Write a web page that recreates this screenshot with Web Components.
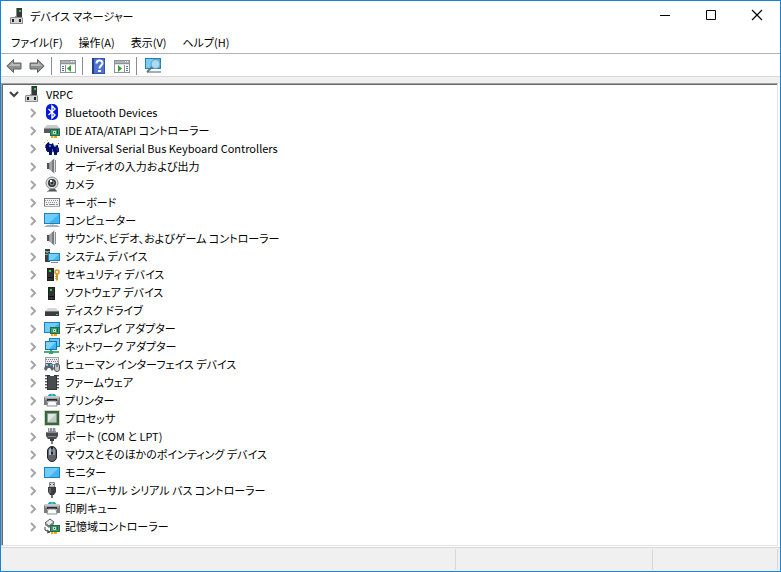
<!DOCTYPE html>
<html lang="ja">
<head>
<meta charset="utf-8">
<title>デバイス マネージャー</title>
<style>
  body {
    margin: 0;
    font: 11px/18px "Noto Sans CJK JP", "Noto Sans", sans-serif;
    font-feature-settings: "palt";
    color: #000;
  }
</style>
</head>
<body>
<dm-window>
  <dm-titlebar slot="title">デバイス マネージャー</dm-titlebar>
  <dm-menubar slot="menu"></dm-menubar>
  <dm-toolbar slot="tools"></dm-toolbar>
  <dm-tree></dm-tree>
  <dm-statusbar slot="status"></dm-statusbar>
</dm-window>

<script>
const board = '<path d="M6 7h10v7H6z" fill="#25694a"/><path d="M7 8h8v5H7z" fill="#3a9c6d"/><path d="M9 9h3v3H9z" fill="#b9e1c8"/><path d="M10 10h1v1h-1z" fill="#1d593c"/><path d="M13 8h1v4h-1z" fill="#185e3a"/><path d="M7 14h6v2H7z" fill="#eda51d"/><path d="M9 14h1v2H9z" fill="#fbe3a8"/>'
const screen = '<path d="M0 2h16v11H0z" fill="#1e7fb9"/><path d="M1 3h14v9H1z" fill="#42b4f0"/><path d="M1 3h14L5 12H1z" fill="#6fcdfb"/>'
const speaker = '<path d="M3 5h2v6H3z" fill="#4c5053"/><path d="M5 5l1-1v8l-1-1z" fill="#94989b"/><path d="M6 4l4-3v14l-4-3z" fill="#a4a8ab"/><path d="M8 2.500L10 1v14l-2-1.500z" fill="#777c80"/><path d="M10 0h1v16h-1z" fill="#d9dbdc"/><path d="M11 2h1v12h-1z" fill="#8d9295"/>'
const printer = '<path d="M4 4c0-3 8-3 8 0z" fill="#1f8fe0"/><path d="M7 2h2v2H7z" fill="#32d0d8"/><path d="M9 2h2v2H9z" fill="#2bb45a"/><path d="M1 4h14l1 2v7h-3V8H3v5H0V6z" fill="#777c7f"/><path d="M1 4h14v2H1z" fill="#c6c9cb"/><path d="M1 6h14v2H1z" fill="#a0a4a6"/><path d="M3 7h10v2H3z" fill="#25292b"/><path d="M4 9h8l1 5H3z" fill="#fafafa" stroke="#8c9092"/>'
const tower = '<path d="M4 3h7v13H4z" fill="#1d1f20"/><path d="M5 4h5v11H5z" fill="#303335"/><path d="M6 5h2v2H6z" fill="#24df3b"/><path d="M5 12h5v1H5z" fill="#111"/>'
const pane = '<path d="M0 2h16v13H0z" fill="#8c9297"/><path d="M1 3h14v2H1z" fill="#aeb3b6"/><path d="M11 3h1v1h-1zM13 3h1v1h-1z" fill="#fff"/><path d="M1 6h14v8H1z" fill="#fff"/><path d="M1 6h14v1H1z" fill="#e1e4e6"/>'

const ICONS = {
  pc: '<path d="M6 0h6v10H6z" fill="#35383a"/><path d="M6 0h1v9H6z" fill="#85898b"/><path d="M9 2h2v2H9z" fill="#2ad44a"/><path d="M0 10l1-1h4v-1h1v1h6l1 1v6H0z" fill="#8c9092"/><path d="M1 10h11v5H1z" fill="#d4d6d7"/><path d="M2 11h2v3H2zM9 11h2v3H9z" fill="#202223"/>',
  bluetooth: '<rect x="2" width="12" height="16" rx="5" fill="#0018d8"/><path d="M4.500 5l6.500 6-3 3V2l3 3-6.500 6" fill="none" stroke="#fff" stroke-width="1.400"/>',
  ide: '<path d="M3 3h10l3 4v3H0V6z" fill="#c9cbcc"/><path d="M0 7h16v4H0z" fill="#55595b"/><path d="M0 6h16v1H0z" fill="#8f9395"/>' + board,
  usbkbd: '<path d="M2 4h5l1 2h5l2 2v4h-2v3h-3v-4H8v4H5v-3H3V8H1z" fill="#102080"/><path d="M3 3l2-1 1 3 3-2 1 3 4-1v2l-3 1 3 4-3 3-2-4-3 4-2-5-2 1V7z" fill="#050b65"/><path d="M5 5h2v2H5zM10 6h2v1h-2zM8 9h1v2H8z" fill="#377cda"/><path d="M0 2h1v1H0z" fill="#e8b500"/><path d="M1 5h1v1H1zM14 3h1v1h-1z" fill="#e22"/><path d="M3 0h1v1H3z" fill="#ebc930"/>',
  speaker,
  camera: '<path d="M4 15l3-3h3l3 3z" fill="#53575a"/><path d="M3 15h10v1H3z" fill="#a5a8aa"/><circle cx="8" cy="7" r="6" fill="#dcdfe0" stroke="#858a8d"/><circle cx="8" cy="7" r="4" fill="#30363a"/><circle cx="8" cy="7" r="2.500" fill="#737b80"/><circle cx="8" cy="7" r="1" fill="#151719"/><path d="M6 4h2v2H6z" fill="#fff"/>',
  keyboard: '<path d="M0 4h16v9H0z" fill="#73797d"/><path d="M1 5h14v7H1z" fill="#f1f2f3"/><path d="M1 6.500h14M2 8.500h12" stroke="#8e9498" stroke-dasharray="1 1"/><path d="M2 10.500h2M12 10.500h2M5 10.500h6" stroke="#858b8f"/><path d="M0 12h16v1H0z" fill="#a9adb0"/>',
  monitor: '<path d="M0 1h16v11H0z" fill="#1e7fb9"/><path d="M1 2h14v9H1z" fill="#42b4f0"/><path d="M1 2h14L5 11H1z" fill="#6fcdfb"/><path d="M0 15l3-2h10l3 2z" fill="#9fb4bf"/><path d="M6 12h4v1H6z" fill="#cfd7db"/>',
  display: '<g transform="translate(0 1)">' + screen + '</g>',
  system: '<path d="M1 1h5v13H1z" fill="#3b3e40"/><path d="M1 3h5v1H1zM1 6h4v1H1z" fill="#8e9294"/><path d="M2 4h2v1H2z" fill="#2ad44a"/><path d="M4 5h12v8H4z" fill="#1e7fb9"/><path d="M5 6h10v6H5z" fill="#42b4f0"/><path d="M5 6h10l-6 6H5z" fill="#74d0fb"/><path d="M7 14h7v1H7z" fill="#7f9098"/>',
  security: '<g transform="translate(-1 -1)">' + tower + '</g><circle cx="13" cy="6" r="2" fill="#fff3cf" stroke="#d9972a" stroke-width="1.500"/><path d="M12 8h2v6l-1 1-1-1z" fill="#d79a26"/><path d="M11 10h1v1h-1zM11 12h1v1h-1z" fill="#d79a26"/>',
  software: tower,
  disk: '<path d="M1 9l3-3h8l3 3z" fill="#d5d7d8"/><path d="M1 9h14v5H1z" fill="#393d3f"/><path d="M1 9h14v1H1z" fill="#737779"/><path d="M12 12h2v1h-2z" fill="#36e04c"/>',
  adapter: screen + board,
  network: '<path d="M5 0h11v9H5z" fill="#1e7fb9"/><path d="M6 1h9v7H6z" fill="#63c8fa"/><path d="M1 3h12v9H1z" fill="#1b75ac"/><path d="M2 4h10v7H2z" fill="#42b4f0"/><path d="M2 4h10l-7 7H2z" fill="#7bd4fc"/><path d="M6 12h2v1H6z" fill="#3ba06a"/><path d="M0 13h15v2H0z" fill="#3fb573"/><path d="M5 13h4v3H5z" fill="#3ba06a"/>',
  hid: '<path d="M1 1h14v8H1z" fill="#9ca1a5"/><path d="M2 2h12v6H2z" fill="#eceeef"/><path d="M2 3.500h12M3 5.500h11" stroke="#777d82" stroke-dasharray="1 1"/><path d="M2 7h6l2 6-2 2-2-3H4l-2 3-2-2z" fill="#526371"/><circle cx="3" cy="9" r="1" fill="#c9e3f4"/><circle cx="7" cy="9" r="1" fill="#4bb3ec"/><rect x="10.500" y="7.500" width="5" height="8" rx="2.500" fill="#c4c9cc" stroke="#50585e"/><path d="M13 8v3" stroke="#333"/>',
  firmware: '<path d="M3 1h10v15H3z" fill="#303436"/><path d="M4 2h8v13H4z" fill="#484c4f"/><path d="M6 0h4v2H6z" fill="#fff"/><path d="M1 1h2v1H1zM1 4h2v1H1zM1 7h2v1H1zM1 10h2v1H1zM1 13h2v1H1zM13 1h2v1h-2zM13 4h2v1h-2zM13 7h2v1h-2zM13 10h2v1h-2zM13 13h2v1h-2z" fill="#55595c"/><path d="M1 2h2v1H1zM1 5h2v1H1zM1 8h2v1H1zM1 11h2v1H1zM1 14h2v1H1zM13 2h2v1h-2zM13 5h2v1h-2zM13 8h2v1h-2zM13 11h2v1h-2zM13 14h2v1h-2z" fill="#b5b8ba"/>',
  printer,
  cpu: '<path d="M.500.500h15v15H.500z" fill="none" stroke="#b8a75c" stroke-dasharray="1 1"/><path d="M1 1h14v14H1z" fill="#2e6749"/><path d="M4 4h8v8H4z" fill="#c3c8c3"/><path d="M4 4h8l-8 8z" fill="#e3e6e2"/><path d="M3.500 3.500h9v9h-9z" fill="none" stroke="#8b9e8e"/>',
  port: '<path d="M4 0h8v4H4z" fill="#8b8f91"/><path d="M5 0h1v3H5zM8 0h1v3H8zM11 0h1v3h-1z" fill="#d6d8d9"/><path d="M2 4h12v4l-2 3H4L2 8z" fill="#484c4f"/><path d="M2 4h12v1H2zM4 8h8v1H4z" fill="#85898c"/><path d="M6 11h4v2H6z" fill="#393d3f"/><path d="M7 13h2v3H7z" fill="#777b7e"/>',
  mouse: '<rect x="3.500" y=".5" width="9" height="15" rx="4.500" fill="#5d6268" stroke="#202326"/><path d="M5 4q1-2 2-2v7H5z" fill="#b5bbc2"/><path d="M9 2q2 0 2 3v4H9z" fill="#8d949b"/><path d="M7 1h2v7H7z" fill="#202326"/><path d="M8 3v3" stroke="#88c4ec"/>',
  usb: '<path d="M5.500.500h5V5h-5z" fill="#d6d8d9" stroke="#818588"/><path d="M6 2h1v1H6zM9 2h1v1H9z" fill="#404346"/><path d="M4 5h8v5l-2 3H6l-2-3z" fill="#3b3e41"/><path d="M5 6h2v5H5z" fill="#65696c"/><path d="M7 13h2v3H7z" fill="#686d70"/>',
  storage: '<path d="M1 5l5-4 4 3-5 4z" fill="#e9eaeb" stroke="#54585a"/><path d="M1 5l4 3v2L1 7zM5 8l5-4v2l-5 4z" fill="#777c7e"/><path d="M1 9v3l4 2M3 12l3 2-3 1" fill="none" stroke="#3a3e40"/>' + board,
  back: '<path d="M.8 8L7.500 1.500v3.500H15v6H7.500v3.500z" fill="#8d8f90" stroke="#5f6264"/><path d="M3 8l4-4v2h7v2z" fill="#b9bbbc"/>',
  forward: '<path d="M15.200 8L8.500 1.500v3.500H1v6h7.500v3.500z" fill="#8d8f90" stroke="#5f6264"/><path d="M13 8L9 4v2H2v2z" fill="#b9bbbc"/>',
  tree: pane + '<path d="M5 7h1v7H5z" fill="#8c9297"/><path d="M2 8h2v1H2zM2 10h2v1H2zM2 12h2v1H2z" fill="#4577a9"/><path d="M11 7v7L7 10.500z" fill="#2ca52d"/>',
  help: '<path d="M1 0h13v16H1z" fill="#3454b0"/><path d="M3 1h10v14H3z" fill="#4f71d2"/><path d="M1 0h2v16H1z" fill="#243e91"/><path d="M5.500 5.500c0-4 6-4 6-.5 0 2.500-3 2.500-3 5.500" fill="none" stroke="#fff" stroke-width="2"/><path d="M7 12h3v2H7z" fill="#fff"/>',
  action: pane + '<path d="M10 7h1v7h-1z" fill="#8c9297"/><path d="M12 8h2v1h-2zM12 10h2v1h-2zM12 12h2v1h-2z" fill="#4577a9"/><path d="M4 7v7l4-3.500z" fill="#2ca52d"/>',
  scan: '<path d="M0 0h16v11H0z" fill="#237eb6"/><path d="M1 1h14v9H1z" fill="#4ab8ef"/><path d="M1 1h7l-3 9H1z" fill="#74d0fb"/><path d="M2 13h14v2H2z" fill="#9db0ba"/><circle cx="10.500" cy="6" r="4.500" fill="#a5dcf6" stroke="#7e96a4"/><path d="M7 9l-5 5" stroke="#637784" stroke-width="2"/>',
  minimize: '<path d="M3 7.500h10" stroke="#000"/>',
  maximize: '<path d="M3.500 2.500h9v9h-9z" fill="none" stroke="#000"/>',
  close: '<path d="M3 2l10 10M13 2L3 12" stroke="#000" stroke-width="1.200"/>',
  collapsed: '<path d="M7 5l4 4-4 4" fill="none" stroke="#a6a6a6" stroke-width="2"/>',
  expanded: '<path d="M5 6l4 4 4-4" fill="none" stroke="#404040" stroke-width="2"/>'
}

const DEVICES = [
  ['bluetooth', 'Bluetooth Devices'],
  ['ide', 'IDE ATA/ATAPI コントローラー'],
  ['usbkbd', 'Universal Serial Bus Keyboard Controllers'],
  ['speaker', 'オーディオの入力および出力'],
  ['camera', 'カメラ'],
  ['keyboard', 'キーボード'],
  ['monitor', 'コンピューター'],
  ['speaker', 'サウンド、ビデオ、およびゲーム コントローラー'],
  ['system', 'システム デバイス'],
  ['security', 'セキュリティ デバイス'],
  ['software', 'ソフトウェア デバイス'],
  ['disk', 'ディスク ドライブ'],
  ['adapter', 'ディスプレイ アダプター'],
  ['network', 'ネットワーク アダプター'],
  ['hid', 'ヒューマン インターフェイス デバイス'],
  ['firmware', 'ファームウェア'],
  ['printer', 'プリンター'],
  ['cpu', 'プロセッサ'],
  ['port', 'ポート (COM と LPT)'],
  ['mouse', 'マウスとそのほかのポインティング デバイス'],
  ['display', 'モニター'],
  ['usb', 'ユニバーサル シリアル バス コントローラー'],
  ['printer', '印刷キュー'],
  ['storage', '記憶域コントローラー']
]

const RESET = `button {
  margin: 0; padding: 0; border: 0; background: none;
  font: inherit; font-feature-settings: inherit; color: inherit;
}`

function render(el, html) {
  el.attachShadow({ mode: 'open' })
  const template = document.createElement('template')
  template.innerHTML = html
  el.shadowRoot.appendChild(template.content.cloneNode(true))
}

class DmIcon extends HTMLElement {
  connectedCallback() {
    if (this.shadowRoot) return
    render(this, `<style>
      :host { display: block; flex: none; width: 16px; height: 16px; }
      svg { display: block; }
      </style>
      <svg width="16" height="16" viewBox="0 0 16 16" aria-hidden="true">${ICONS[this.getAttribute('name')]}</svg>`)
  }
}

customElements.define('dm-icon', DmIcon)

class DmWindow extends HTMLElement {
  constructor() {
    super()
    render(this, `<style>
      :host {
        display: flex; flex-direction: column; box-sizing: border-box;
        min-height: 100vh; border: 1px solid #1883d7; background: #fff;
      }
      main {
        flex: 1; margin-right: 2px; padding-bottom: 1px;
        border: 1px solid #a0a0a0; border-right-color: #e3e3e3; border-bottom-color: #e3e3e3;
        box-shadow: inset 1px 1px #696969;
      }
      </style>
      <slot name="title"></slot>
      <slot name="menu"></slot>
      <slot name="tools"></slot>
      <main><slot></slot></main>
      <slot name="status"></slot>`)
  }
}

customElements.define('dm-window', DmWindow)

class DmTitlebar extends HTMLElement {
  constructor() {
    super()
    render(this, `<style>${RESET}
      :host { display: flex; align-items: center; height: 29px; padding-left: 9px; }
      span { flex: 1; margin-left: 4px; }
      button { display: grid; place-items: center; width: 46px; height: 29px; }
      </style>
      <dm-icon name="pc"></dm-icon>
      <span><slot></slot></span>
      <button aria-label="最小化"><dm-icon name="minimize"></dm-icon></button>
      <button aria-label="最大化"><dm-icon name="maximize"></dm-icon></button>
      <button aria-label="閉じる"><dm-icon name="close"></dm-icon></button>`)
  }
}

customElements.define('dm-titlebar', DmTitlebar)

class DmMenubar extends HTMLElement {
  constructor() {
    super()
    render(this, `<style>${RESET}
      :host { display: flex; height: 23px; padding-left: 2px; border-bottom: 1px solid #b0b0b8; }
      button { padding: 0 8px; }
      </style>
      <button>ファイル(F)</button>
      <button>操作(A)</button>
      <button>表示(V)</button>
      <button>ヘルプ(H)</button>`)
  }
}

customElements.define('dm-menubar', DmMenubar)

class DmToolbar extends HTMLElement {
  constructor() {
    super()
    render(this, `<style>${RESET}
      :host { display: block; }
      div { display: flex; align-items: center; height: 22px; padding: 0 1px; border-bottom: 1px solid #d9d9d9; }
      button { display: grid; place-items: center; width: 23px; height: 22px; padding-top: 2px; }
      i { width: 1px; height: 18px; margin: 2px 4px 0 3px; background: #8d8d8d; }
      footer { height: 6px; background: #f0f0f0; }
      </style>
      <div>
        <button aria-label="戻る"><dm-icon name="back"></dm-icon></button>
        <button aria-label="進む"><dm-icon name="forward"></dm-icon></button>
        <i></i>
        <button aria-label="コンソール ツリーの表示"><dm-icon name="tree"></dm-icon></button>
        <i></i>
        <button aria-label="ヘルプ"><dm-icon name="help"></dm-icon></button>
        <button aria-label="操作ウィンドウの表示"><dm-icon name="action"></dm-icon></button>
        <i></i>
        <button aria-label="ハードウェア変更のスキャン"><dm-icon name="scan"></dm-icon></button>
      </div>
      <footer></footer>`)
  }
}

customElements.define('dm-toolbar', DmToolbar)

class DmNode extends HTMLElement {
  connectedCallback() {
    if (this.shadowRoot) return
    const arrow = this.hasAttribute('open') ? 'expanded' : 'collapsed'
    render(this, `<style>${RESET}
      :host { display: block; }
      div { display: flex; align-items: center; height: 18px; }
      span { margin-left: 5px; white-space: nowrap; }
      button { width: 16px; margin-right: 4px; }
      section { padding-left: 19px; }
      </style>
      <div>
        <button aria-label="展開"><dm-icon name="${arrow}"></dm-icon></button>
        <dm-icon name="${this.getAttribute('icon')}"></dm-icon>
        <span>${this.getAttribute('label')}</span>
      </div>
      <section><slot></slot></section>`)
  }
}

customElements.define('dm-node', DmNode)

class DmTree extends HTMLElement {
  constructor() {
    super()
    const nodes = DEVICES.map(([icon, label]) => `<dm-node icon="${icon}" label="${label}"></dm-node>`)
    render(this, `<style>
      :host { display: block; padding: 1px 0 0 3px; }
      </style>
      <dm-node open icon="pc" label="VRPC">${nodes.join('')}</dm-node>`)
  }
}

customElements.define('dm-tree', DmTree)

class DmStatusbar extends HTMLElement {
  constructor() {
    super()
    render(this, `<style>
      :host {
        display: grid; grid-template-columns: 1fr 197px 125px; height: 21px;
        margin-top: 1px; padding: 1px 2px 1px 0;
        border-top: 1px solid #d7d7d7; background: #f0f0f0;
      }
      div { border-right: 1px solid #d7d7d7; }
      </style>
      <div></div><div></div><div></div>`)
  }
}

customElements.define('dm-statusbar', DmStatusbar)
</script>
</body>
</html>
